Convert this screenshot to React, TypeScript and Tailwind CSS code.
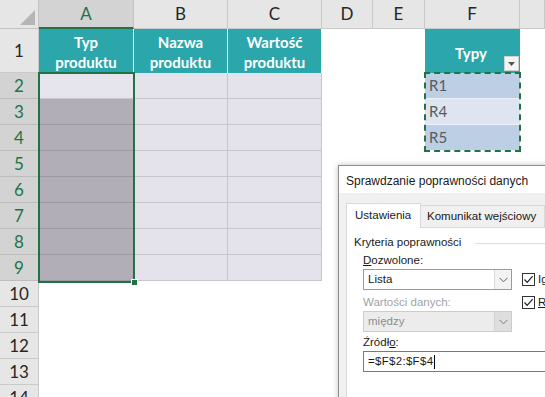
import React from 'react';

const COLS = ['A', 'B', 'C', 'D', 'E', 'F', 'G'];
const ROWS = Array.from({ length: 14 }, (_, i) => i + 1);

const headerText: Record<string, string[]> = {
  A: ['Typ', 'produktu'],
  B: ['Nazwa', 'produktu'],
  C: ['Wartość', 'produktu'],
};

const typy: Record<number, { label: string; bg: string }> = {
  2: { label: 'R1', bg: 'bg-[#bccfe5]' },
  3: { label: 'R4', bg: 'bg-[#dde5f0]' },
  4: { label: 'R5', bg: 'bg-[#bccfe5]' },
};

const Chevron: React.FC<{ color: string }> = ({ color }) => (
  <svg width="9" height="6" viewBox="0 0 9 6">
    <path d="M0.5 0.8 L4.5 4.8 L8.5 0.8" fill="none" stroke={color} strokeWidth="1" />
  </svg>
);

const CheckBox: React.FC = () => (
  <div className="w-[13px] h-[13px] shrink-0 border border-[#333] bg-white flex items-center justify-center">
    <svg width="11" height="11" viewBox="0 0 11 11">
      <path d="M1.5 5.5 L4.2 8.3 L9.6 2.2" fill="none" stroke="#222" strokeWidth="1.2" />
    </svg>
  </div>
);

const Cell: React.FC<{ row: number; col: string }> = ({ row, col }) => {
  if (row === 1) {
    if (headerText[col]) {
      return (
        <div className="bg-[#2ba6aa] border-r border-white flex flex-col items-center justify-center text-white font-bold text-[15px] leading-[20px] pt-[2px]">
          {headerText[col].map((t) => (
            <span key={t}>{t}</span>
          ))}
        </div>
      );
    }
    if (col === 'F') {
      return (
        <div className="bg-[#2ba6aa] relative flex items-center justify-center text-white font-bold text-[15px] pt-[4px] pr-[3px]">
          Typy
          <div className="absolute right-[1px] bottom-[2px] w-[15px] h-[15px] bg-[#f4f4f4] border border-[#d0d0d0] flex items-center justify-center">
            <svg width="7" height="4" viewBox="0 0 7 4">
              <path d="M0 0 L7 0 L3.5 4 Z" fill="#555" />
            </svg>
          </div>
        </div>
      );
    }
    return <div className="bg-white" />;
  }

  if (row <= 9 && (col === 'A' || col === 'B' || col === 'C')) {
    if (col === 'A' && row > 2) {
      return <div className="bg-[#b2aeb7] border-b border-[#9d99a2]" />;
    }
    if (col === 'A') {
      return <div className="bg-[#e6e4ec] border-b border-[#c7c5ce]" />;
    }
    return <div className="bg-[#e4e2ea] border-r border-b border-[#c7c5ce]" />;
  }

  if (col === 'F' && typy[row]) {
    return (
      <div className={`${typy[row].bg} border-b border-[#eef2f8] flex items-center pl-[4px] text-[15px] text-[#5a5a5a]`}>
        {typy[row].label}
      </div>
    );
  }

  return <div className="bg-white" />;
};

const App: React.FC = () => {
  return (
    <div className="relative w-[545px] h-[397px] overflow-hidden bg-white font-['Lato',sans-serif]">
      <div className="grid grid-cols-[39px_95px_94px_94px_51px_52px_95px_1fr] grid-rows-[29px_44px_repeat(14,26px)]">
        {/* corner */}
        <div className="bg-[#e6e6e6] border-r border-b border-[#c3c3c3] flex items-end justify-end p-[3px]">
          <svg width="15" height="15" viewBox="0 0 15 15">
            <path d="M15 0 L15 15 L0 15 Z" fill="#b5b5b5" />
          </svg>
        </div>

        {COLS.map((c) =>
          c === 'A' ? (
            <div
              key={c}
              className="bg-[#d3d3d3] border-r border-[#c3c3c3] border-b-2 border-b-[#217346] flex items-center justify-center text-[17px] text-[#217346]"
            >
              {c}
            </div>
          ) : (
            <div
              key={c}
              className="bg-[#e6e6e6] border-r border-b border-[#c9c9c9] flex items-center justify-center text-[17px] text-[#262626]"
            >
              {c === 'G' ? '' : c}
            </div>
          )
        )}

        {ROWS.map((r) => (
          <React.Fragment key={r}>
            {r >= 2 && r <= 9 ? (
              <div className="bg-[#d3d3d3] border-r border-b border-[#bdbdbd] flex items-center justify-center text-[17px] text-[#217346]">
                {r}
              </div>
            ) : (
              <div className="bg-[#e6e6e6] border-r border-b border-[#c9c9c9] flex items-center justify-center text-[17px] text-[#262626]">
                {r}
              </div>
            )}
            {COLS.map((c) => (
              <Cell key={c} row={r} col={c} />
            ))}
          </React.Fragment>
        ))}
      </div>

      {/* selection A2:A9 */}
      <div className="absolute left-[38px] top-[72px] w-[97px] h-[211px] border-2 border-[#217346]">
        <div className="absolute right-[-5px] bottom-[-5px] w-[7px] h-[7px] bg-[#217346] border border-white" />
      </div>

      {/* copy range F2:F4 */}
      <div className="absolute left-[424px] top-[72px] w-[97px] h-[80px] border-2 border-dashed border-[#217346]" />

      {/* data validation dialog */}
      <div className="absolute left-[338px] top-[165px] w-[260px] h-[260px] bg-[#f0f0f0] border border-[#8f8f8f] shadow-[0_0_6px_rgba(0,0,0,0.25)] font-['Liberation_Sans',Arial,sans-serif] text-[11.5px] text-[#1a1a1a]">
        <div className="h-[27px] bg-white pl-[7px] flex items-center text-[12px] pt-[2px]">
          Sprawdzanie poprawności danych
        </div>
        <div className="pl-[7px] pt-[9px]">
          <div className="flex items-end h-[25px]">
            <div className="h-[25px] w-[75px] shrink-0 bg-white border-t border-l border-r border-[#d9d9d9] flex items-center pl-[8px] relative z-10 -mb-px pb-[1px]">
              Ustawienia
            </div>
            <div className="h-[22px] shrink-0 bg-[#f0f0f0] border-t border-r border-[#d9d9d9] flex items-center pl-[6px] pr-[8px] whitespace-nowrap">
              Komunikat wejściowy
            </div>
          </div>
          <div className="bg-white border border-[#d9d9d9] h-[220px] pl-[7px] pt-[8px]">
            <div className="flex items-center h-[14px]">
              <span className="whitespace-nowrap">Kryteria poprawności</span>
              <div className="flex-1 h-px bg-[#dcdcdc] ml-[14px]" />
            </div>
            <div className="pl-[9px]">
              <div className="flex">
                <div className="w-[149px] shrink-0 flex flex-col">
                  <div className="h-[14px] mt-[4px] flex items-center">
                    <span>
                      <span className="underline">D</span>ozwolone:
                    </span>
                  </div>
                  <div className="h-[21px] mt-[1px] border border-[#9a9a9a] bg-white flex">
                    <div className="flex-1 flex items-center pl-[4px]">Lista</div>
                    <div className="w-[17px] border-l border-[#dadada] bg-[#f3f3f3] flex items-center justify-center">
                      <Chevron color="#606060" />
                    </div>
                  </div>
                  <div className="h-[14px] mt-[6px] flex items-center text-[#a2a2a2] whitespace-nowrap">
                    Wartości danych:
                  </div>
                  <div className="h-[21px] mt-[1px] border border-[#cccccc] bg-[#ececec] flex">
                    <div className="flex-1 flex items-center pl-[4px] text-[#8d8d8d]">między</div>
                    <div className="w-[17px] border-l border-[#d2d2d2] bg-[#dedede] flex items-center justify-center">
                      <Chevron color="#7a7a7a" />
                    </div>
                  </div>
                </div>
                <div className="ml-[10px] pt-[21px] shrink-0 flex flex-col gap-[6px]">
                  <div className="flex items-center gap-[3px] whitespace-nowrap">
                    <CheckBox />
                    <span>Ignoruj puste</span>
                  </div>
                  <div className="flex items-center gap-[3px] whitespace-nowrap">
                    <CheckBox />
                    <span>
                      <span className="underline">R</span>ozwinięcie w komórce
                    </span>
                  </div>
                </div>
              </div>
              <div className="h-[14px] mt-[4px] flex items-center">
                <span>
                  Źródł<span className="underline">o</span>:
                </span>
              </div>
              <div className="h-[21px] mt-[1px] w-[220px] border border-[#7a7a7a] bg-white flex items-center pl-[4px]">
                <span className="tracking-[0.3px]">=$F$2:$F$4</span>
                <div className="w-px h-[14px] bg-black ml-[1px]" />
              </div>
            </div>
          </div>
        </div>
      </div>
    </div>
  );
};

export default App;
